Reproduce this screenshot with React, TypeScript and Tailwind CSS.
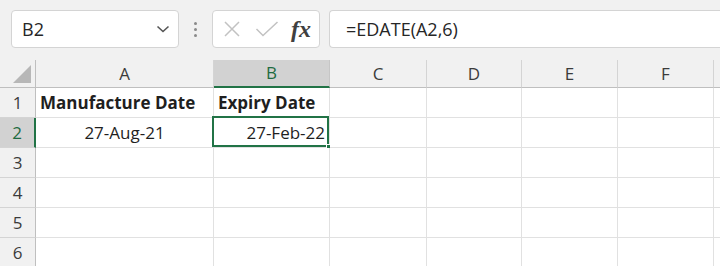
import React from 'react';

const cols = [
  { k: 'A', w: 'w-[178px]' },
  { k: 'B', w: 'w-[116px]' },
  { k: 'C', w: 'w-[97px]' },
  { k: 'D', w: 'w-[95px]' },
  { k: 'E', w: 'w-[96px]' },
  { k: 'F', w: 'w-[96px]' },
  { k: '', w: 'w-[40px]' },
];

const rows = [1, 2, 3, 4, 5, 6];

const Toolbar = () => (
  <div className="flex h-[60px] items-start bg-[#f1f1f1] pt-[10px]">
    <div className="ml-[11px] flex h-[38px] w-[168px] items-center justify-between rounded-[4px] border border-[#d4d4d4] bg-white pl-[10px] pr-[8px] text-[18px] text-[#262626]">
      <span>B2</span>
      <svg width="14" height="8" viewBox="0 0 14 8" fill="none">
        <path d="M1.5 1.5 L7 6.5 L12.5 1.5" stroke="#555" strokeWidth="1.6" />
      </svg>
    </div>
    <div className="flex h-[38px] w-[33px] flex-col items-center justify-center gap-[3px]">
      <span className="h-[3px] w-[3px] rounded-full bg-[#8a8a8a]" />
      <span className="h-[3px] w-[3px] rounded-full bg-[#8a8a8a]" />
      <span className="h-[3px] w-[3px] rounded-full bg-[#8a8a8a]" />
    </div>
    <div className="flex h-[38px] w-[108px] items-center rounded-[4px] border border-[#d4d4d4] bg-white pl-[10px]">
      <svg width="18" height="18" viewBox="0 0 18 18" fill="none">
        <path d="M2 2 L16 16 M16 2 L2 16" stroke="#c2c2c2" strokeWidth="1.5" />
      </svg>
      <svg className="ml-[14px]" width="24" height="18" viewBox="0 0 24 18" fill="none">
        <path d="M1.5 9 L8 15.5 L22.5 2" stroke="#c2c2c2" strokeWidth="1.5" />
      </svg>
      <span className="ml-[12px] font-['Liberation_Serif',serif] text-[24px] font-bold italic leading-none text-[#404040]">fx</span>
    </div>
    <div className="ml-[9px] flex h-[38px] flex-1 items-center rounded-l-[4px] border border-r-0 border-[#d4d4d4] bg-white pl-[16px] text-[18px] text-[#262626]">
      =EDATE(A2,6)
    </div>
  </div>
);

const Header = () => (
  <div className="flex h-[28px]">
    <div className="flex w-[36px] shrink-0 items-end justify-end border-r border-b border-[#bfbfbf] bg-[#f1f1f1] pb-[4px] pr-[4px]">
      <svg width="18" height="18" viewBox="0 0 18 18">
        <path d="M18 0 L18 18 L0 18 Z" fill="#b7b7b7" />
      </svg>
    </div>
    {cols.map((c, i) =>
      c.k === 'B' ? (
        <div
          key={i}
          className={`${c.w} flex shrink-0 items-center justify-center border-b-2 border-r border-r-[#c6c6c6] border-b-[#217346] bg-[#d2d2d2] text-[#1e6b41]`}
        >
          {c.k}
        </div>
      ) : (
        <div
          key={i}
          className={`${c.w} flex shrink-0 items-center justify-center border-r border-b border-r-[#d4d4d4] border-b-[#bfbfbf] bg-[#f1f1f1] text-[#3b3b3b]`}
        >
          {c.k}
        </div>
      )
    )}
  </div>
);

const cellText = (r: number, k: string) => {
  if (r === 1 && k === 'A') return <span className="pl-[4px] font-bold">Manufacture Date</span>;
  if (r === 1 && k === 'B') return <span className="pl-[4px] font-bold">Expiry Date</span>;
  if (r === 2 && k === 'A') return <span className="w-full text-center">27-Aug-21</span>;
  if (r === 2 && k === 'B') return <span className="w-full pr-[4px] text-right">27-Feb-22</span>;
  return null;
};

const Row = ({ r }: { r: number }) => (
  <div className="flex h-[30px]">
    {r === 2 ? (
      <div className="flex w-[36px] shrink-0 items-center justify-center border-r-2 border-b border-r-[#217346] border-b-[#d4d4d4] bg-[#d2d2d2] text-[#1e6b41]">
        {r}
      </div>
    ) : (
      <div className="flex w-[36px] shrink-0 items-center justify-center border-r border-b border-r-[#bfbfbf] border-b-[#d4d4d4] bg-[#f1f1f1] text-[#3b3b3b]">
        {r}
      </div>
    )}
    {cols.map((c, i) => (
      <div
        key={i}
        className={`${c.w} relative flex shrink-0 items-center border-r border-b border-[#e1e1e1] bg-white text-[#1f1f1f]`}
      >
        {cellText(r, c.k)}
        {r === 2 && c.k === 'B' && (
          <>
            <div className="absolute left-[-2px] top-[-2px] h-[31px] w-[117px] border-2 border-[#217346]" />
            <div className="absolute bottom-[-4px] right-[-4px] h-[7px] w-[7px] border border-white bg-[#217346]" />
          </>
        )}
      </div>
    ))}
  </div>
);

export default function App() {
  return (
    <div className="h-[266px] w-[720px] overflow-hidden bg-white font-['Open_Sans',sans-serif] text-[17px]">
      <Toolbar />
      <Header />
      {rows.map((r) => (
        <Row key={r} r={r} />
      ))}
    </div>
  );
}
